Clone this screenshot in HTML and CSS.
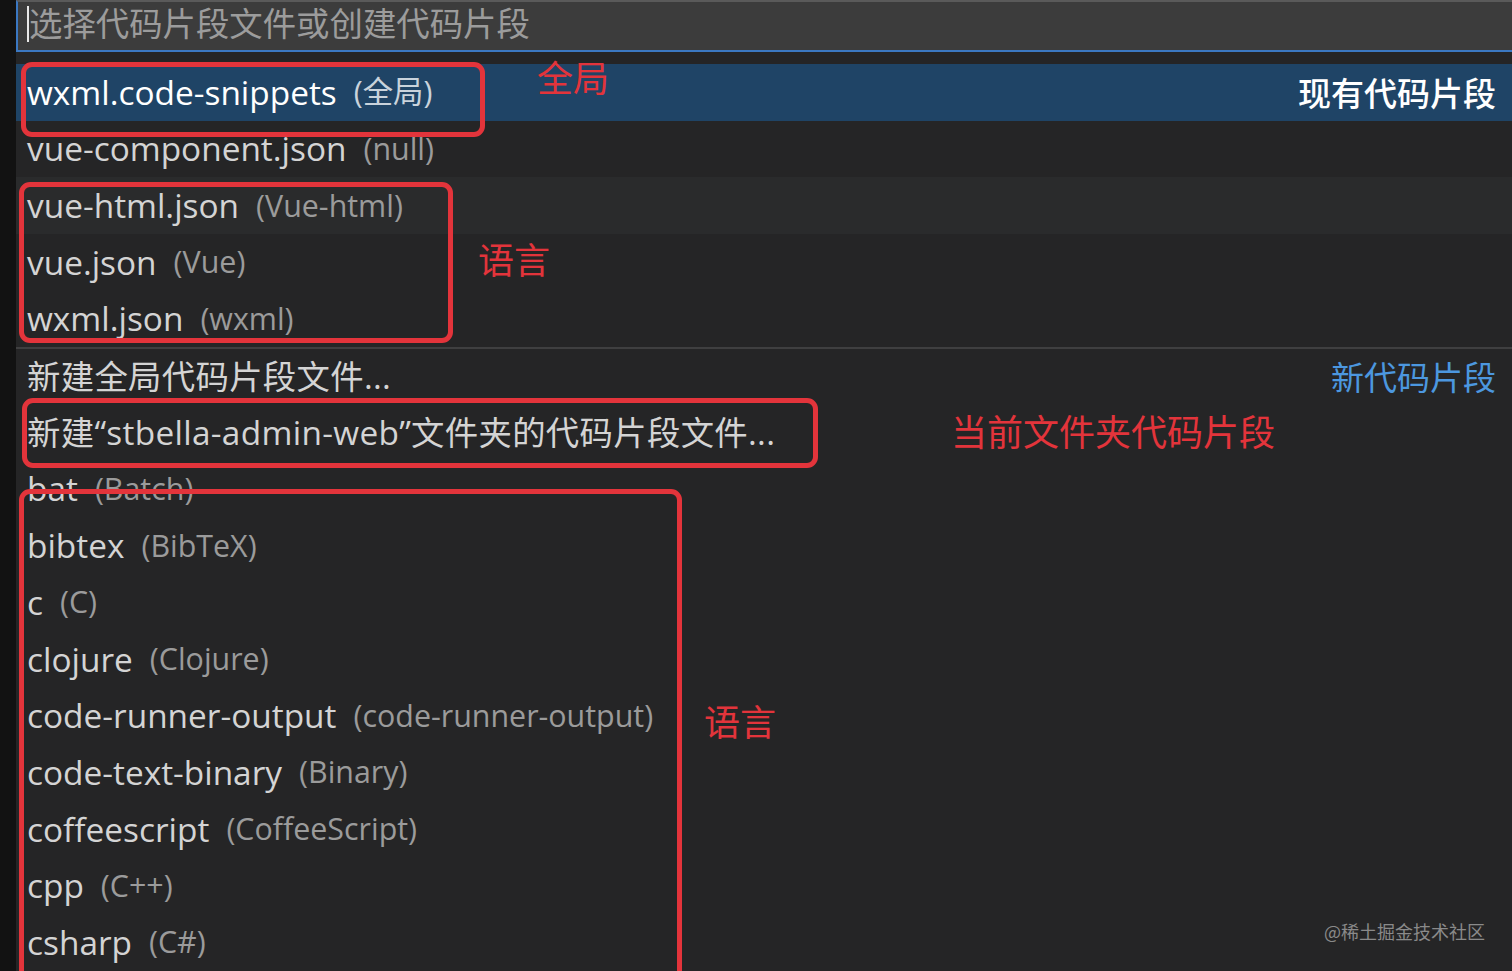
FILE: index.html
```html
<!DOCTYPE html>
<html lang="zh-CN">
<head>
<meta charset="utf-8">
<title>Snippets</title>
<link rel="stylesheet" href="styles.css">
</head>
<body>
<div class="frame">
  <div class="gutter"></div>
  <div class="panel">
    <div class="input"><span class="caret"></span><span class="placeholder">选择代码片段文件或创建代码片段</span></div>
    <div class="list">
      <div class="row selected"><span class="label">wxml.code-snippets</span><span class="desc">(全局)</span><span class="group">现有代码片段</span></div>
      <div class="row"><span class="label">vue-component.json</span><span class="desc">(null)</span></div>
      <div class="row hover"><span class="label">vue-html.json</span><span class="desc">(Vue-html)</span></div>
      <div class="row"><span class="label">vue.json</span><span class="desc">(Vue)</span></div>
      <div class="row"><span class="label">wxml.json</span><span class="desc">(wxml)</span></div>
      <div class="row sep"><span class="label cjk">新建全局代码片段文件...</span><span class="group blue">新代码片段</span></div>
      <div class="row"><span class="label cjk">新建“stbella-admin-web”文件夹的代码片段文件...</span></div>
      <div class="row"><span class="label">bat</span><span class="desc">(Batch)</span></div>
      <div class="row"><span class="label">bibtex</span><span class="desc">(BibTeX)</span></div>
      <div class="row"><span class="label">c</span><span class="desc">(C)</span></div>
      <div class="row"><span class="label">clojure</span><span class="desc">(Clojure)</span></div>
      <div class="row"><span class="label">code-runner-output</span><span class="desc">(code-runner-output)</span></div>
      <div class="row"><span class="label">code-text-binary</span><span class="desc">(Binary)</span></div>
      <div class="row"><span class="label">coffeescript</span><span class="desc">(CoffeeScript)</span></div>
      <div class="row"><span class="label">cpp</span><span class="desc">(C++)</span></div>
      <div class="row"><span class="label">csharp</span><span class="desc">(C#)</span></div>
    </div>
  </div>
</div>

<div class="annotations">
  <div class="box box1"></div>
  <div class="box box2"></div>
  <div class="box box3"></div>
  <div class="box box4"></div>
  <div class="note note1">全局</div>
  <div class="note note2">语言</div>
  <div class="note note3">当前文件夹代码片段</div>
  <div class="note note4">语言</div>
</div>

<div class="watermark">@稀土掘金技术社区</div>
</body>
</html>
```

FILE: styles.css
```css
html, body {
  margin: 0;
  padding: 0;
  width: 1512px;
  height: 971px;
  overflow: hidden;
  background: #252526;
  font-family: "Open Sans", "Noto Sans CJK SC", sans-serif;
}

.frame {
  display: flex;
  height: 971px;
}

.gutter {
  width: 16px;
  flex: none;
  background: #121212;
}

.panel {
  flex: 1;
  display: flex;
  flex-direction: column;
  min-width: 0;
}

.input {
  background: #3c3c3c;
  border-top: 2px solid #5a5a5a;
  border-left: 2px solid #3b78c2;
  border-bottom: 2px solid #3b78c2;
  display: flex;
  align-items: flex-start;
  padding: 2px 0 0 9px;
  box-sizing: border-box;
  height: 52px;
}

.caret {
  width: 2px;
  height: 36px;
  margin-top: 2px;
  background: #e8e8e8;
  flex: none;
}

.placeholder {
  font-family: "Noto Sans CJK SC", sans-serif;
  font-size: 33.4px;
  color: #9c9c9c;
  line-height: 40px;
  margin-top: -2px;
}

.list {
  padding-top: 12px;
  display: flex;
  flex-direction: column;
}

.row {
  height: 56.7px;
  flex: none;
  display: flex;
  align-items: center;
  padding: 0 16px 0 11px;
  white-space: nowrap;
  color: #d4d4d4;
  box-sizing: border-box;
}

.row.selected {
  background: #1f4466;
  color: #ffffff;
}

.row.hover {
  background: #2a2b2c;
}

.row.sep {
  border-top: 2px solid #3f3f40;
}

.label {
  font-size: 33.4px;
  font-weight: 500;
  line-height: 1;
}

.label.cjk {
  font-weight: 400;
  letter-spacing: 0.3px;
}

.desc {
  font-size: 30.4px;
  line-height: 1;
  color: #9b9b9b;
  margin-left: 17px;
}

.selected .desc {
  color: #c9d3dc;
}

.group {
  margin-left: auto;
  font-family: "Noto Sans CJK SC", sans-serif;
  font-size: 33px;
  font-weight: 500;
  line-height: 1;
  color: #ffffff;
}

.group.blue {
  color: #4c97df;
  font-weight: 400;
}

.annotations {
  position: absolute;
  inset: 0;
  pointer-events: none;
}

.box {
  position: absolute;
  border: 5px solid #e3343b;
  border-radius: 11px;
  box-sizing: border-box;
}

.box1 { left: 21px; top: 62px; width: 464px; height: 75px; }
.box2 { left: 19px; top: 182px; width: 434px; height: 161px; }
.box3 { left: 22px; top: 398px; width: 796px; height: 70px; }
.box4 { left: 19px; top: 489px; width: 663px; height: 500px; }

.note {
  position: absolute;
  font-family: "Noto Sans CJK SC", sans-serif;
  font-size: 36px;
  line-height: 1;
  color: #e3343b;
  font-weight: 400;
}

.note1 { left: 537px; top: 58px; }
.note2 { left: 478px; top: 240px; }
.note3 { left: 951px; top: 412px; }
.note4 { left: 704px; top: 702px; }

.watermark {
  position: absolute;
  left: 1324px;
  top: 922px;
  font-family: "Noto Sans CJK SC", sans-serif;
  font-size: 18px;
  line-height: 1;
  color: #8a8a8a;
}
```
